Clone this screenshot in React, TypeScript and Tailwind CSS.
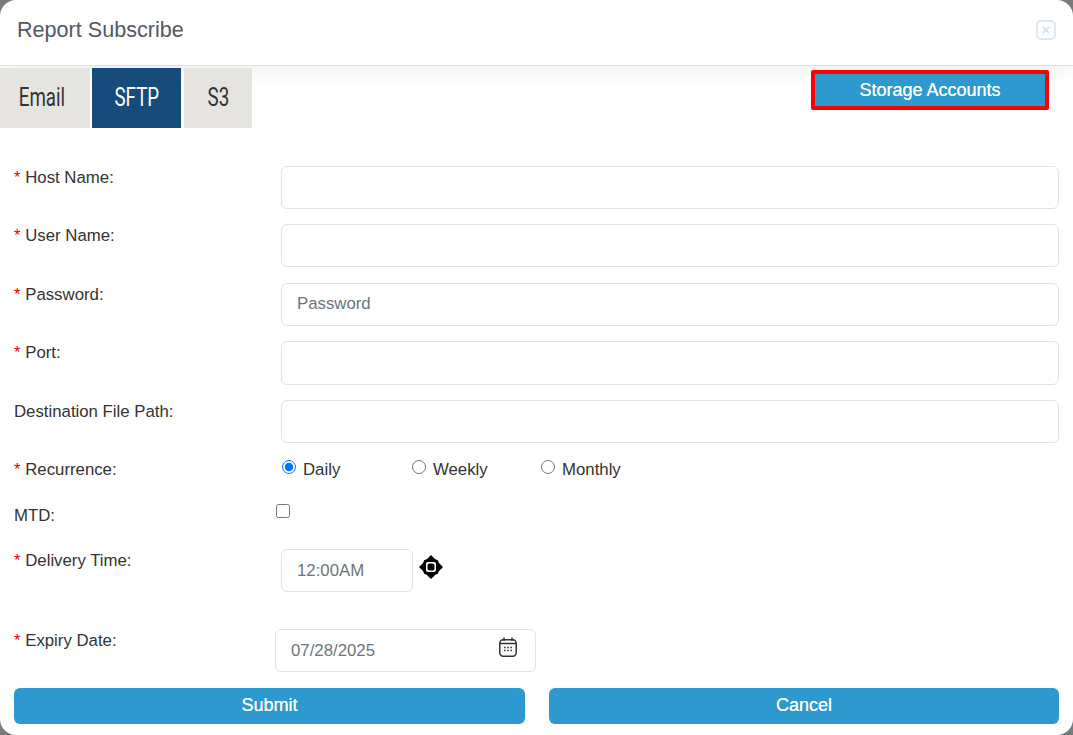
const inputClass =
  'rounded-md border border-[#dee2e6] bg-white px-[15px] text-[16.8px] text-[#212529] placeholder:text-[#6c757d] outline-none';

function Label({ text, required = true }: { text: string; required?: boolean }) {
  return (
    <label className="block text-[16.8px] leading-6 text-[#333]">
      {required && <span className="text-[#e00000]">* </span>}
      {text}
    </label>
  );
}

function TextRow({ label, placeholder, required, className, height = 'h-[43px]' }: { label: string; placeholder?: string; required?: boolean; className: string; height?: string }) {
  return (
    <div className={`flex ${className}`}>
      <div className="w-[267px]">
        <Label text={label} required={required} />
      </div>
      <input className={`${inputClass} ${height} w-[778px]`} placeholder={placeholder} />
    </div>
  );
}

function MoveIcon() {
  return (
    <svg width="26" height="26" viewBox="0 0 26 26" className="mt-[5px] ml-[5px]">
      <path d="M13 1 L18.5 6.5 H7.5 Z M13 25 L7.5 19.5 H18.5 Z M1 13 L6.5 7.5 V18.5 Z M25 13 L19.5 18.5 V7.5 Z" fill="#000" />
      <rect x="5.5" y="5.5" width="15" height="15" rx="3" fill="#000" />
      <rect x="8" y="8" width="10" height="10" rx="2" fill="#fff" />
      <rect x="9.5" y="9.5" width="7" height="7" rx="2" fill="#000" />
    </svg>
  );
}

function CalendarIcon() {
  return (
    <svg width="20" height="22" viewBox="0 0 20 22" fill="none" stroke="#333" className="mt-[-1px] ml-[-1px]">
      <rect x="1.75" y="3.75" width="16.5" height="16.5" rx="3.5" strokeWidth="1.5" />
      <path d="M1.75 7.5 H18.25 M6 1.5 V5 M14 1.5 V5" strokeWidth="1.5" />
      <path d="M6 11.5h1.6M9.2 11.5h1.6M12.4 11.5h1.6M6 14.5h1.6M9.2 14.5h1.6M12.4 14.5h1.6" strokeWidth="1.6" />
    </svg>
  );
}

function Radio({ label, checked, className }: { label: string; checked?: boolean; className: string }) {
  return (
    <label className={`flex items-center ${className}`}>
      <input type="radio" name="recurrence" defaultChecked={checked} className="m-0 mb-[7px] h-[14px] w-[14px] accent-[#0075ff]" />
      <span className="ml-[7px] text-[16.8px] text-[#333]">{label}</span>
    </label>
  );
}

const actionClass = 'rounded-md bg-[#2d99cf] pb-[2px] text-[18px] font-normal text-white [text-shadow:0_0_0.6px_#fff]';

export default function App() {
  return (
    <div className="h-[735px] w-[1073px] overflow-hidden bg-[#7a7a7a] font-['Liberation_Sans',Arial,sans-serif]">
      <div className="h-full rounded-[16px] bg-white">
        {/* Header */}
        <div className="flex h-[66px] items-center justify-between border-b border-[#dee2e6] pr-[17px] pb-[5px] pl-[17px] shadow-[0_4px_24px_rgba(0,0,0,0.07)]">
          <h1 className="text-[21.6px] font-normal text-[#565664]">Report Subscribe</h1>
          <button className="flex h-[20px] w-[20px] items-center justify-center rounded-[5px] border-2 border-[#dce8fa] text-[#d5e2f7]">
            <svg width="8" height="8" viewBox="0 0 8 8">
              <path d="M1 1 L7 7 M7 1 L1 7" stroke="currentColor" strokeWidth="1.8" />
            </svg>
          </button>
        </div>

        {/* Tabs */}
        <div className="relative mt-[2px] flex h-[60px] items-start">
          <div className="flex h-[60px] w-[90px] items-center justify-center bg-[#e5e4e0] pr-[6px] text-[#333]">
            <span className="scale-x-75 font-['Roboto',sans-serif] text-[25px]">Email</span>
          </div>
          <div className="ml-[2px] flex h-[60px] w-[89px] items-center justify-center bg-[#164b7c] text-white">
            <span className="scale-x-75 font-['Roboto',sans-serif] text-[25px]">SFTP</span>
          </div>
          <div className="ml-[3px] flex h-[60px] w-[68px] items-center justify-center bg-[#e5e4e0] text-[#333]">
            <span className="scale-x-75 font-['Roboto',sans-serif] text-[25px]">S3</span>
          </div>
          <button className="mt-[2px] mr-[24px] ml-auto h-[40px] w-[238px] rounded-[2px] border-[4px] border-[#fe0000] bg-[#2d99cf] text-[18px] text-white [text-shadow:0_0_0.6px_#fff]">
            Storage Accounts
          </button>
        </div>

        {/* Form */}
        <div className="pl-[14px]">
          <TextRow label="Host Name:" className="mt-[38px]" />
          <TextRow label="User Name:" className="mt-[15px]" />
          <TextRow label="Password:" placeholder="Password" className="mt-[16px]" height="h-[43px] pb-[2px]" />
          <TextRow label="Port:" height="h-[44px]" className="mt-[15px]" />
          <TextRow label="Destination File Path:" required={false} className="mt-[15px]" />

          <div className="mt-[15px] flex h-6">
            <div className="w-[268px]">
              <Label text="Recurrence:" />
            </div>
            <Radio label="Daily" checked className="w-[130px]" />
            <Radio label="Weekly" className="w-[129px]" />
            <Radio label="Monthly" className="w-[120px]" />
          </div>

          <div className="mt-[22px] flex h-6">
            <div className="w-[262px]">
              <Label text="MTD:" required={false} />
            </div>
            <input type="checkbox" className="mt-0 h-[14px] w-[14px]" />
          </div>

          <div className="mt-[21px] flex">
            <div className="w-[267px]">
              <Label text="Delivery Time:" />
            </div>
            <input className={`${inputClass} h-[43px] w-[132px]`} placeholder="12:00AM" />
            <MoveIcon />
          </div>

          <div className="mt-[37px] flex">
            <div className="w-[261px]">
              <Label text="Expiry Date:" />
            </div>
            <div className="flex h-[43px] w-[261px] items-start justify-between rounded-md border border-[#dee2e6] pt-[7px] pr-[17px] pl-[15px]">
              <span className="pt-[1px] text-[16.8px] text-[#6c757d]">07/28/2025</span>
              <CalendarIcon />
            </div>
          </div>

          <div className="mt-[16px] flex gap-[24px]">
            <button className={`${actionClass} h-[36px] w-[511px]`}>Submit</button>
            <button className={`${actionClass} h-[36px] w-[510px]`}>Cancel</button>
          </div>
        </div>
      </div>
    </div>
  );
}
